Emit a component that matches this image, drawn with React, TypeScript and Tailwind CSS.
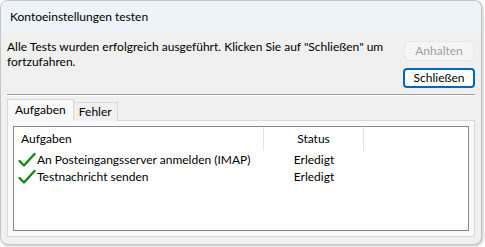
import React from "react";

const Check = () => (
  <svg width="18" height="16" viewBox="0 0 18 16" className="shrink-0">
    <path d="M1.5 9 L6 13.5 L16.5 2" fill="none" stroke="#138a13" strokeWidth="2.4" strokeLinecap="round" strokeLinejoin="round" />
  </svg>
);

export default function App() {
  return (
    <div className="w-[485px] h-[247px] bg-white relative overflow-hidden whitespace-nowrap" style={{ fontFamily: 'Lato, "Noto Sans", sans-serif' }}>
      <div className="w-[482px] h-[245px] rounded-[8px] border border-[#c4c4c4] bg-[#f0f0f0] shadow-[1px_1px_3px_rgba(0,0,0,0.25)] overflow-hidden flex flex-col text-[12px] text-black">
        <div className="h-[31px] bg-[#eef2f9] flex items-center pl-[9px] text-[12px] leading-none shrink-0">
          Kontoeinstellungen testen
        </div>
        <div className="flex px-[6px] pt-[8px]">
          <div className="flex-1 leading-[15px] -mt-[1px]">
            Alle Tests wurden erfolgreich ausgeführt. Klicken Sie auf "Schließen" um<br />fortzufahren.
          </div>
          <div className="flex flex-col items-end gap-[7px] pt-[1px]">
            <div className="w-[70px] h-[20px] rounded-[4px] bg-[#f5f5f5] border border-[#e8e8e8] text-[#a0a0a0] flex items-center justify-center mr-[1px]">Anhalten</div>
            <div className="w-[72px] h-[20px] rounded-[4px] bg-white border-2 border-[#0067c0] flex items-center justify-center">Schließen</div>
          </div>
        </div>
        <div className="mx-[6px] mt-[6px] h-[2px] border-t border-[#a0a0a0] border-b border-b-white"></div>
        <div className="px-[6px] pt-[3px] flex flex-col flex-1 pb-[7px]">
          <div className="flex items-end h-[22px] relative z-10">
            <div className="h-[22px] px-[7px] pb-[2px] border border-[#d9d9d9] border-b-0 bg-[#f9f9f9] flex items-center">Aufgaben</div>
            <div className="h-[19px] px-[5px] border border-[#d9d9d9] border-b-0 border-l-0 bg-[#f0f0f0] flex items-center">Fehler</div>
          </div>
          <div className="flex-1 border border-[#d9d9d9] bg-[#f9f9f9] -mt-px p-[5px] pb-[5px]">
            <div className="h-full border border-[#828790] bg-white flex flex-col">
              <div className="flex h-[24px] items-center">
                <div className="w-[250px] pl-[7px] h-full flex items-center border-r border-[#e5e5e5]">Aufgaben</div>
                <div className="w-[100px] h-full flex items-center justify-center border-r border-[#e5e5e5]">Status</div>
              </div>
              <div className="flex flex-col leading-[17px]">
                <div className="flex h-[17px] items-center">
                  <div className="w-[250px] pl-[4px] flex items-center gap-[1px]"><Check />An Posteingangsserver anmelden (IMAP)</div>
                  <div className="w-[100px] text-center">Erledigt</div>
                </div>
                <div className="flex h-[17px] items-center">
                  <div className="w-[250px] pl-[4px] flex items-center gap-[1px]"><Check />Testnachricht senden</div>
                  <div className="w-[100px] text-center">Erledigt</div>
                </div>
              </div>
            </div>
          </div>
        </div>
      </div>
    </div>
  );
}
